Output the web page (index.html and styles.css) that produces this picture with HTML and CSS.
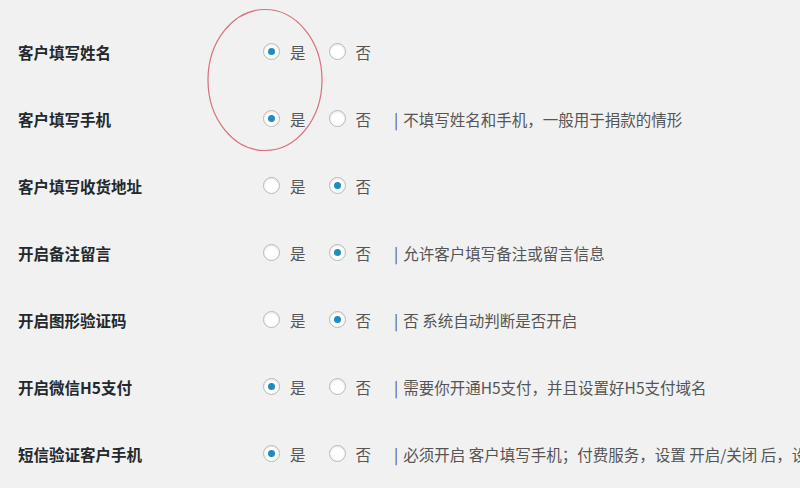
FILE: index.html
```html
<!DOCTYPE html>
<html lang="zh-CN">
<head>
  <meta charset="UTF-8">
  <title>设置</title>
  <link rel="stylesheet" href="styles.css">
</head>
<body>
  <div class="form-table">
    <div class="row">
      <div class="th">客户填写姓名</div>
      <div class="td">
        <label class="opt"><input type="radio" name="r1" checked>是</label>
        <label class="opt"><input type="radio" name="r1">否</label>
      </div>
    </div>
    <div class="row">
      <div class="th">客户填写手机</div>
      <div class="td">
        <label class="opt"><input type="radio" name="r2" checked>是</label>
        <label class="opt"><input type="radio" name="r2">否</label>
        <span class="desc"><span class="bar">|</span>不填写姓名和手机，一般用于捐款的情形</span>
      </div>
    </div>
    <div class="row">
      <div class="th">客户填写收货地址</div>
      <div class="td">
        <label class="opt"><input type="radio" name="r3">是</label>
        <label class="opt"><input type="radio" name="r3" checked>否</label>
      </div>
    </div>
    <div class="row">
      <div class="th">开启备注留言</div>
      <div class="td">
        <label class="opt"><input type="radio" name="r4">是</label>
        <label class="opt"><input type="radio" name="r4" checked>否</label>
        <span class="desc"><span class="bar">|</span>允许客户填写备注或留言信息</span>
      </div>
    </div>
    <div class="row">
      <div class="th">开启图形验证码</div>
      <div class="td">
        <label class="opt"><input type="radio" name="r5">是</label>
        <label class="opt"><input type="radio" name="r5" checked>否</label>
        <span class="desc"><span class="bar">|</span>否 系统自动判断是否开启</span>
      </div>
    </div>
    <div class="row">
      <div class="th">开启微信H5支付</div>
      <div class="td">
        <label class="opt"><input type="radio" name="r6" checked>是</label>
        <label class="opt"><input type="radio" name="r6">否</label>
        <span class="desc"><span class="bar">|</span>需要你开通H5支付，并且设置好H5支付域名</span>
      </div>
    </div>
    <div class="row">
      <div class="th">短信验证客户手机</div>
      <div class="td">
        <label class="opt"><input type="radio" name="r7" checked>是</label>
        <label class="opt"><input type="radio" name="r7">否</label>
        <span class="desc"><span class="bar">|</span>必须开启 客户填写手机；付费服务，设置 开启/关闭 后，设</span>
      </div>
    </div>
  </div>

  <!-- hand-drawn annotation -->
  <svg class="mark" width="130" height="150" viewBox="0 0 130 150">
    <ellipse cx="65" cy="75" rx="57" ry="70.5" fill="none" stroke="#d9707a" stroke-width="1.2"/>
  </svg>
</body>
</html>
```

FILE: styles.css
```css
body {
  margin: 0;
  padding: 18px 0 0 18px;
  background: #f1f1f1;
  font-family: "Noto Sans CJK SC", "Liberation Sans", sans-serif;
  font-size: 15.5px;
  color: #444;
  overflow: hidden;
  white-space: nowrap;
}
.row {
  display: flex;
  align-items: center;
  height: 67px;
}
.th {
  width: 245px;
  flex-shrink: 0;
  font-weight: bold;
  color: #23282d;
}
.td {
  display: flex;
  align-items: center;
}
.opt {
  display: flex;
  align-items: center;
  margin-right: 23px;
  color: #555;
}
.opt input {
  -webkit-appearance: none;
  appearance: none;
  flex-shrink: 0;
  width: 17px;
  height: 17px;
  margin: 0 10px 0 0;
  border: 1px solid #b4b9be;
  border-radius: 50%;
  background: #fff;
  box-shadow: inset 0 1px 2px rgba(0, 0, 0, .1);
  display: flex;
  align-items: center;
  justify-content: center;
}
.opt input:checked::before {
  content: "";
  width: 7px;
  height: 7px;
  border-radius: 50%;
  background: #1e8cbe;
}
.desc {
  color: #555;
}
.bar {
  color: #555;
  margin-right: 5px;
}
.mark {
  position: absolute;
  left: 200px;
  top: 5px;
}
```
